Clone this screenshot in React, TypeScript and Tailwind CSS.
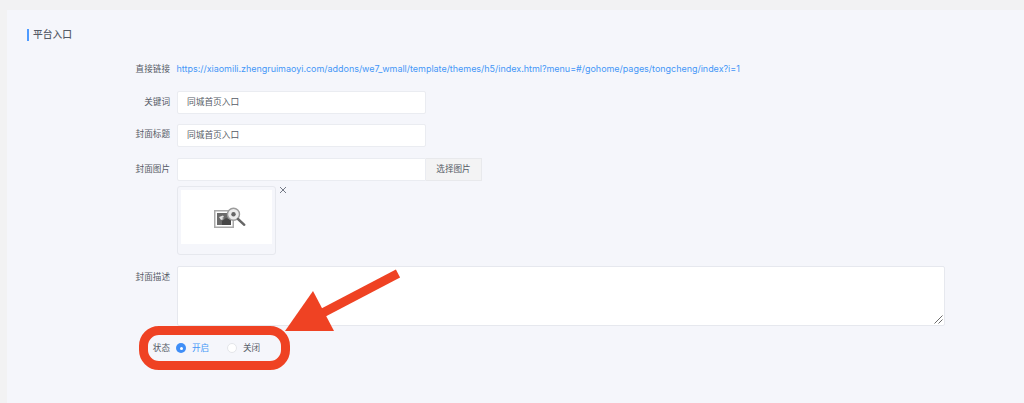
import type { ReactNode } from "react";

const font = { fontFamily: '"Inter", "Noto Sans CJK SC", sans-serif' };

const labelClass = "w-[163px] shrink-0 text-right text-[8.6px] leading-[12px] text-[#555b66]";

const FormRow = ({ label, children, className, labelTop = "pt-[5px]" }: { label: string; children: ReactNode; className: string; labelTop?: string }) => (
  <div className={`flex gap-[7px] ${className}`}>
    <div className={`${labelClass} ${labelTop}`}>{label}</div>
    {children}
  </div>
);

const TextBox = ({ value }: { value: string }) => (
  <div className="flex h-[23px] w-[249px] items-center rounded-[2px] border border-[#eaecf1] bg-white pl-[9px] text-[8.7px] text-[#555b66]">
    {value}
  </div>
);

const PlaceholderIcon = () => (
  <svg width="32" height="21" viewBox="0 0 32 21" fill="none">
    <rect x="0.75" y="3.75" width="18.5" height="16.5" fill="#fff" stroke="#a9a9a9" strokeWidth="1.5" />
    <path d="M3 6h14v12H3z" fill="#6a6a6a" />
    <path d="M5 10l4-1.5 1 1.5-2 1 2 1-3 1z" fill="#e4e4e4" />
    <path d="M8 14l4-3 5 2v5H8z" fill="#474747" />
    <circle cx="19.5" cy="7.3" r="6" fill="#ececec" stroke="#9c9c9c" strokeWidth="1.4" />
    <circle cx="19.5" cy="7.3" r="2.2" fill="#666" />
    <path d="M24 12l6.3 5.8" stroke="#666" strokeWidth="2.4" strokeLinecap="round" />
  </svg>
);

export default function App() {
  return (
    <div className="h-[403px] w-[1024px] overflow-hidden bg-[#f2f2f3] pl-[7px] pt-[10px]" style={font}>
      <div className="relative h-[393px] bg-[#f5f6fb]">
        <div className="flex h-[50px] items-start pl-[20px] pt-[19px]">
          <div className="flex h-[12px] items-center border-l-2 border-[#4f9bff] pl-[4px] pt-[1px] text-[9.75px] font-medium text-[#555b66]">
            平台入口
          </div>
        </div>

        <FormRow label="直接链接" className="h-[31px] pt-[3px]" labelTop="">
          <a className="-ml-[0.5px] text-[8.96px] leading-[12px] text-[#4496f7]">
            https://xiaomili.zhengruimaoyi.com/addons/we7_wmall/template/themes/h5/index.html?menu=#/gohome/pages/tongcheng/index?i=1
          </a>
        </FormRow>

        <FormRow label="关键词" className="h-[33px]">
          <TextBox value="同城首页入口" />
        </FormRow>

        <FormRow label="封面标题" className="h-[34px]" labelTop="pt-[4px]">
          <TextBox value="同城首页入口" />
        </FormRow>

        <FormRow label="封面图片" className="h-[28px]">
          <div className="flex h-[23px]">
            <div className="w-[249px] rounded-l-[2px] border border-[#eaecf1] bg-white" />
            <div className="flex w-[56px] items-center justify-center border border-l-0 border-[#e8e9ec] bg-[#f3f3f4] text-[8.6px] text-[#555b66]">
              选择图片
            </div>
          </div>
        </FormRow>

        <div className="flex h-[80px] pl-[170px]">
          <div className="h-[69px] w-[99px] rounded-[3px] border border-[#e6e8ee] px-[3px] pt-[3px]">
            <div className="flex h-[54px] items-center justify-center bg-white pl-[6px]">
              <PlaceholderIcon />
            </div>
          </div>
          <svg className="ml-[3px]" width="8" height="8" viewBox="0 0 8 8">
            <path d="M1 1l6 6M7 1L1 7" stroke="#666c78" strokeWidth="0.9" />
          </svg>
        </div>

        <FormRow label="封面描述" className="h-[71px]">
          <div className="relative h-[60px] w-[768px] rounded-[2px] border border-[#e6e8ee] bg-white">
            <svg className="absolute bottom-[1px] right-[1px]" width="9" height="9" viewBox="0 0 9 9">
              <path d="M0.5 8.5L8.5 0.5M4.5 8.5L8.5 4.5" stroke="#6b6b6b" strokeWidth="1" />
            </svg>
          </div>
        </FormRow>

        <FormRow label="状态" className="pt-[5px]" labelTop="">
          <div className="-ml-[1px] flex h-[12px] items-center text-[8.6px] leading-[12px]">
            <span className="flex h-[10px] w-[10px] items-center justify-center rounded-full bg-[#3f8ef7]">
              <span className="h-[3px] w-[3px] rounded-full bg-white" />
            </span>
            <span className="ml-[6px] w-[35px] text-[#4496f7]">开启</span>
            <span className="h-[10px] w-[10px] rounded-full border border-[#e4e6ea] bg-white" />
            <span className="ml-[6px] text-[#555b66]">关闭</span>
          </div>
        </FormRow>

        {/* red callout over the form */}
        <div className="pointer-events-none absolute left-[132px] top-[316px] h-[44px] w-[151px] rounded-[20px] border-[9px] border-[#ef4223]" />
        <svg className="pointer-events-none absolute left-[270px] top-[255px]" width="130" height="75" viewBox="0 0 130 75">
          <path d="M121 8.5L36 53" stroke="#ef4223" strokeWidth="9" />
          <path d="M8 66L36 26L57 66z" fill="#ef4223" />
        </svg>
      </div>
    </div>
  );
}
